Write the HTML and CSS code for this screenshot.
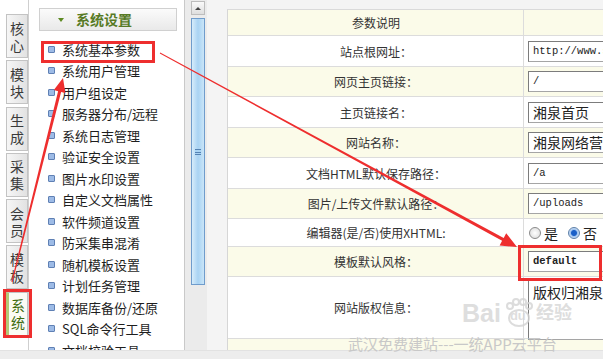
FILE: index.html
```html
<!doctype html>
<html lang="zh-CN">
<head>
<meta charset="UTF-8">
<title>系统基本参数</title>
<link rel="stylesheet" href="styles.css">
</head>
<body>
<div class="screen">
	<div class="frame">
		<div class="tabs">
			<div class="tab"><span>核</span><span>心</span></div>
			<div class="tab"><span>模</span><span>块</span></div>
			<div class="tab"><span>生</span><span>成</span></div>
			<div class="tab"><span>采</span><span>集</span></div>
			<div class="tab"><span>会</span><span>员</span></div>
			<div class="tab"><span>模</span><span>板</span></div>
			<div class="tab on"><span>系</span><span>统</span></div>
		</div>
		<div class="right">
			<div class="topline"></div>
			<div class="panes">
				<div class="menu">
					<div class="menu-head"><span class="tri"></span>系统设置</div>
					<ul class="menu-list">
						<li>系统基本参数</li>
						<li>系统用户管理</li>
						<li>用户组设定</li>
						<li>服务器分布/远程</li>
						<li>系统日志管理</li>
						<li>验证安全设置</li>
						<li>图片水印设置</li>
						<li>自定义文档属性</li>
						<li>软件频道设置</li>
						<li>防采集串混淆</li>
						<li>随机模板设置</li>
						<li>计划任务管理</li>
						<li>数据库备份/还原</li>
						<li>SQL命令行工具</li>
						<li>文档校验工具</li>
					</ul>
				</div>
				<div class="scroll">
					<div class="btn-up"><span></span></div>
					<div class="thumb"><span class="grip"></span></div>
				</div>
				<div class="spacer"></div>
				<div class="content">
					<div class="topband"></div>
					<div class="params">
						<div class="row h26"><div class="lab">参数说明</div><div class="val"></div></div>
						<div class="row h31"><div class="lab">站点根网址：</div><div class="val"><div class="inp mono">http://www.s</div></div></div>
						<div class="row h30"><div class="lab">网页主页链接：</div><div class="val"><div class="inp mono">/</div></div></div>
						<div class="row h31"><div class="lab">主页链接名：</div><div class="val"><div class="inp cn">湘泉首页</div></div></div>
						<div class="row h30"><div class="lab">网站名称：</div><div class="val"><div class="inp cn">湘泉网络营销</div></div></div>
						<div class="row h31"><div class="lab">文档HTML默认保存路径：</div><div class="val"><div class="inp mono">/a</div></div></div>
						<div class="row h30"><div class="lab">图片/上传文件默认路径：</div><div class="val"><div class="inp mono">/uploads</div></div></div>
						<div class="row h28"><div class="lab">编辑器(是/否)使用XHTML:</div><div class="val radios"><span class="radio"></span>是<span class="radio sel"></span>否</div></div>
						<div class="row h30"><div class="lab">模板默认风格：</div><div class="val"><div class="inp mono bold">default</div></div></div>
						<div class="row h62"><div class="lab">网站版权信息：</div><div class="val top"><div class="area cn">版权归湘泉网络</div></div></div>
						<div class="row last"><div class="lab"></div><div class="val"></div></div>
					</div>
				</div>
			</div>
		</div>
	</div>
	<div class="status"></div>

	<div class="wm-logo">
		<span class="wm-bai">Bai</span>
		<span class="wm-paw">
			<svg width="34" height="30" viewBox="0 0 34 30"><g fill="none" stroke="#d4d4d4" stroke-width="2"><ellipse cx="17" cy="20" rx="10" ry="8"/><circle cx="8" cy="8" r="3"/><circle cx="14" cy="4" r="3"/><circle cx="21" cy="4" r="3"/><circle cx="27" cy="8" r="3"/></g></svg>
			<span class="wm-du">du</span>
		</span>
		<span class="wm-jy">经验</span>
	</div>
	<div class="wm-text">武汉免费建站---一统APP云平台</div>

	<svg class="marks" width="603" height="359" viewBox="0 0 603 359">
		<g fill="none" stroke="#ee2e2e" stroke-width="3">
			<rect x="42.5" y="42.5" width="111" height="19"/>
			<rect x="4.5" y="290.5" width="26" height="46"/>
			<rect x="519.5" y="246.5" width="81" height="33"/>
		</g>
		<g fill="#ee2e2e">
			<polygon points="11.4,281.9 58.1,91.2 53.8,90.1 63,78 65.4,93.1 61.1,92 12.6,282.1"/>
			<polygon points="160.2,52.6 503.7,238 506.2,233.3 517,247 499.6,245.6 502.1,240.8 159.8,53.4"/>
		</g>
	</svg>
</div>
</body>
</html>
```
FILE: styles.css
```css
*{
	box-sizing:border-box;
}
body{
	margin:0;
	font-family:"Noto Sans CJK SC","DejaVu Sans",sans-serif;
	color:#333;
	background:#fff;
}
.screen{
	position:relative;
	width:603px;
	height:359px;
	overflow:hidden;
	display:flex;
	flex-direction:column;
}
.frame{
	height:350px;
	display:flex;
}
.status{
	height:9px;
	background:#ededed;
	border-top:1px solid #e2e2e2;
}

/* 左侧竖排标签 */
.tabs{
	width:30px;
	border-right:1px solid #cfcfcf;
	padding:14px 0 0 6px;
}
.tab{
	width:22px;
	height:44px;
	margin-bottom:2.3px;
	border:1px solid #c3c3c3;
	background:linear-gradient(to right,#f6f6f6,#e2e2e2);
	font-size:14px;
	color:#3a3a3a;
	display:flex;
	flex-direction:column;
	align-items:center;
	justify-content:center;
	gap:3px;
}
.tab span{
	display:block;
	height:14px;
	line-height:14px;
}
.tab.on{
	background:#fbfbf4;
	border-left:3px solid #b3c877;
	color:#3f6c10;
}

.right{
	flex:1;
	display:flex;
	flex-direction:column;
}
.topline{
	height:3px;
	background:#93ad45;
}
.panes{
	flex:1;
	display:flex;
}

/* 菜单 */
.menu{
	width:156px;
	border-right:1px solid #c9c9c9;
	padding:8px 0 0 10px;
	overflow:hidden;
}
.menu-head{
	width:138px;
	height:23px;
	border:1px solid #d0d0d0;
	background:linear-gradient(#fbfbfb,#e9e9e9);
	font-size:14px;
	font-weight:bold;
	color:#577a25;
	line-height:21px;
	padding-left:18px;
	display:flex;
	align-items:center;
}
.tri{
	width:0;
	height:0;
	border-left:3px solid transparent;
	border-right:3px solid transparent;
	border-top:4px solid #5d8a22;
	margin-right:12px;
}
.menu-list{
	list-style:none;
	margin:7.5px 0 0 0;
	padding:0 0 0 9px;
}
.menu-list li{
	height:21.5px;
	line-height:21.5px;
	font-size:13px;
	color:#1e1e1e;
	white-space:nowrap;
	display:flex;
	align-items:center;
}
.menu-list li::before{
	content:"";
	width:5px;
	height:5px;
	border:1px solid #5f80b4;
	border-radius:1px;
	background:#9dbbe6;
	margin-right:7px;
}

/* 滚动条 */
.scroll{
	width:22px;
	background:#ebebeb;
	padding:1px 0 0 6px;
}
.btn-up{
	width:14px;
	height:14px;
	border:1px solid #bdbdbd;
	background:linear-gradient(#fafafa,#dedede);
	display:flex;
	align-items:center;
	justify-content:center;
}
.btn-up span{
	width:0;
	height:0;
	border-left:3px solid transparent;
	border-right:3px solid transparent;
	border-bottom:3px solid #444;
}
.thumb{
	width:14px;
	height:267px;
	margin-top:3px;
	border:1px solid #6f9ccc;
	background:linear-gradient(to right,#d6ecfb,#a9d3f3 50%,#c9e5f8);
	display:flex;
	align-items:center;
	justify-content:center;
}
.grip{
	width:6px;
	height:6px;
	border-top:1px solid #5583b4;
	border-bottom:1px solid #5583b4;
	background:linear-gradient(#a9d3f3 2px,#5583b4 2px,#5583b4 3px,#a9d3f3 3px);
}
.spacer{
	width:20px;
	background:#f4f4f4;
}

/* 参数表 */
.content{
	flex:1;
	overflow:hidden;
	background:#f4f4f4;
}
.topband{
	height:9px;
}
.params{
	border-top:1px solid #dadada;
	border-left:1px solid #d6d6d6;
}
.row{
	display:flex;
	border-bottom:1px solid #dcdcdc;
	background:#fff;
}
.row:nth-child(odd){
	background:#fbfbe9;
}
.h26{height:26px;}
.h28{height:28px;}
.h30{height:30px;}
.h31{height:31px;}
.h62{height:62px;}
.last{height:20px;}
.lab{
	width:296px;
	border-right:1px solid #dcdcdc;
	font-size:12px;
	text-align:center;
	color:#333;
	display:flex;
	align-items:center;
	justify-content:center;
	padding-left:1px;
}
.val{
	flex:1;
	display:flex;
	align-items:center;
	padding-left:4px;
}
.val.top{
	align-items:flex-start;
	padding-top:3px;
}
.inp,.area{
	width:120px;
	height:21px;
	border:1px solid #a5a5a5;
	border-top-color:#7c7c7c;
	border-left-color:#7c7c7c;
	background:#fff;
	padding-left:4px;
	white-space:nowrap;
	overflow:hidden;
	color:#222;
}
.area{
	height:60px;
	padding-top:2px;
}
.mono{
	font-family:"Liberation Mono","DejaVu Sans Mono",monospace;
	font-size:10.5px;
	line-height:19px;
}
.bold{
	font-weight:bold;
}
.cn{
	font-size:14px;
	line-height:19px;
}
.radios{
	font-size:14px;
	color:#222;
	padding-left:5px;
}
.radio{
	width:12px;
	height:12px;
	border-radius:50%;
	border:1px solid #8a8a8a;
	background:radial-gradient(#fff,#d8d8d8);
	margin-right:3px;
}
.radio.sel{
	margin-left:10px;
	background:radial-gradient(#1a5fc7 2.5px,#9ec3f0 3.5px,#e6eef8 6px);
	border-color:#5c7fa8;
}

/* 水印与标注 */
.wm-logo{
	position:absolute;
	left:462px;
	top:298px;
	display:flex;
	align-items:flex-end;
	color:#d6d6d6;
	opacity:.8;
}
.wm-bai{
	font-family:"Liberation Sans",sans-serif;
	font-size:25px;
	font-weight:bold;
	line-height:30px;
}
.wm-paw{
	position:relative;
	width:34px;
	height:30px;
	margin-left:1px;
}
.wm-paw svg{
	display:block;
}
.wm-du{
	position:absolute;
	left:8px;
	top:10px;
	font-family:"Liberation Sans",sans-serif;
	font-size:13px;
	font-weight:bold;
}
.wm-jy{
	font-size:18px;
	font-weight:bold;
	line-height:26px;
	align-self:flex-start;
}
.wm-text{
	position:absolute;
	left:348px;
	top:333px;
	font-size:15px;
	color:#c8c8c8;
	white-space:nowrap;
}
.marks{
	position:absolute;
	left:0;
	top:0;
	pointer-events:none;
}
```
